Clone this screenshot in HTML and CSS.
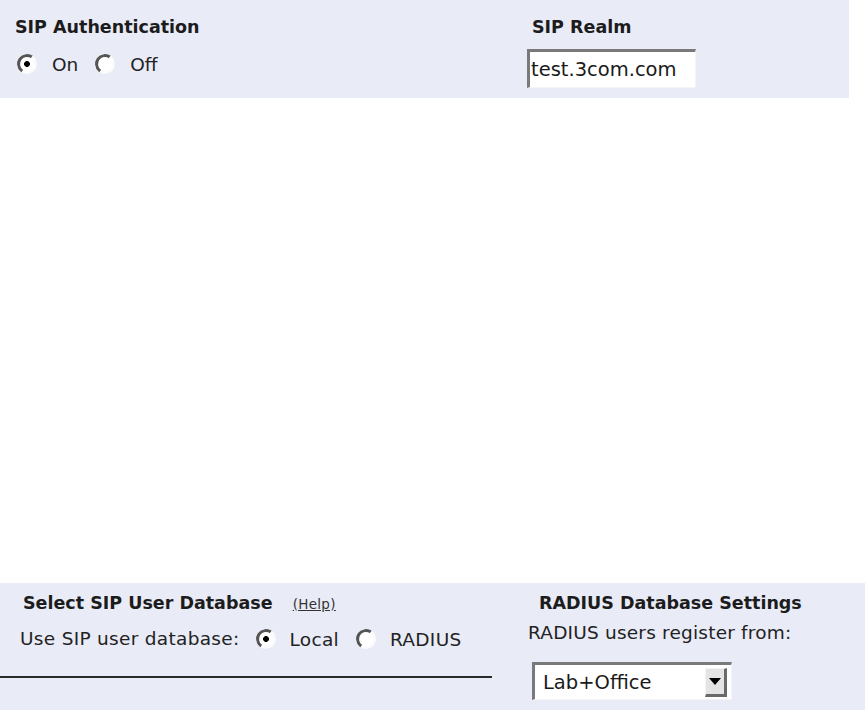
FILE: index.html
```html
<!DOCTYPE html>
<html lang="en">
<head>
    <meta charset="UTF-8">
    <title>SIP Authentication</title>
    <link rel="stylesheet" href="styles.css">
</head>
<body>
<div class="panel panel-top">
    <div class="col col-auth">
        <div class="heading">SIP Authentication</div>
        <div class="radio-row">
            <label class="radio"><input type="radio" name="auth" checked><span>On</span></label>
            <label class="radio"><input type="radio" name="auth"><span>Off</span></label>
        </div>
    </div>
    <div class="col col-realm">
        <div class="heading">SIP Realm</div>
        <input type="text" class="text-field" value="test.3com.com">
    </div>
</div>

<div class="panel panel-bottom">
    <div class="col col-db">
        <div class="heading heading-db">Select SIP User Database <a href="#" class="help">(Help)</a></div>
        <div class="radio-row db-row">
            <span class="row-label">Use SIP user database:</span>
            <label class="radio"><input type="radio" name="db" checked><span>Local</span></label>
            <label class="radio"><input type="radio" name="db"><span>RADIUS</span></label>
        </div>
        <div class="rule"></div>
    </div>
    <div class="col col-radius">
        <div class="heading heading-radius">RADIUS Database Settings</div>
        <div class="row-label">RADIUS users register from:</div>
        <div class="select-box">
            <span class="select-value">Lab+Office</span>
            <span class="select-arrow"></span>
        </div>
    </div>
</div>
</body>
</html>
```

FILE: styles.css
```css
body {
    margin: 0;
    background-color: #fff;
    font-family: "DejaVu Sans", sans-serif;
    color: #222;
}

.panel {
    background-color: #e9ebf7;
    display: flex;
}

.panel-top {
    width: 849px;
    height: 98px;
    box-sizing: border-box;
    padding-top: 15px;
}

.panel-bottom {
    margin-top: 485px;
    height: 127px;
    box-sizing: border-box;
    padding-top: 8px;
}

.heading {
    font-weight: bold;
    font-size: 17.5px;
    line-height: 24px;
    color: #1c1c1c;
    white-space: nowrap;
}

/* top panel */
.col-auth {
    width: 527px;
    padding-left: 15px;
    box-sizing: border-box;
}

.col-auth .radio-row {
    margin-top: 13px;
    margin-left: 2px;
}

.col-realm .heading {
    margin-left: 5px;
}

.text-field {
    display: block;
    margin-top: 10px;
    width: 169px;
    height: 39px;
    box-sizing: border-box;
    padding: 0 0 0 1px;
    border-style: solid;
    border-width: 3px 1px 1px 3px;
    border-color: #7a7a7a #f4f4f4 #f4f4f4 #7a7a7a;
    background: #fff;
    font-family: "DejaVu Sans", sans-serif;
    font-size: 19.5px;
    color: #1a1a1a;
    outline: none;
}

/* radio buttons */
.radio-row {
    display: flex;
    align-items: center;
    height: 24px;
    font-size: 18.5px;
}

.radio {
    display: flex;
    align-items: center;
    margin-right: 17px;
}

.radio input {
    appearance: none;
    -webkit-appearance: none;
    margin: 0 15px 0 0;
    width: 20px;
    height: 20px;
    border-radius: 50%;
    border: 3px solid;
    border-color: #555 #fbfbfb #fbfbfb #555;
    background-color: #fff;
    box-sizing: border-box;
    transform: rotate(-10deg);
}

.radio input:checked {
    background: radial-gradient(circle, #000 0, #000 2.6px, #fff 3.2px);
}

/* bottom panel */
.col-db {
    width: 528px;
}

.heading-db {
    padding-left: 23px;
}

.help {
    margin-left: 14px;
    font-weight: normal;
    font-size: 13.5px;
    letter-spacing: 0.3px;
    color: #333;
    text-decoration: underline;
}

.db-row {
    margin-top: 11px;
    padding-left: 20px;
    letter-spacing: 0.3px;
}

.db-row .row-label {
    margin-right: 16px;
}

.db-row .radio input {
    margin-right: 14px;
}

.rule {
    margin-top: 25px;
    width: 492px;
    border-top: 2px solid #2a2a2a;
}

.col-radius .heading-radius {
    margin-left: 11px;
}

.row-label {
    font-size: 18.5px;
    line-height: 24px;
    white-space: nowrap;
}

.col-radius .row-label {
    margin-top: 6px;
    letter-spacing: 0.2px;
}

.select-box {
    display: flex;
    align-items: center;
    margin: 17px 0 0 4px;
    width: 200px;
    height: 38px;
    box-sizing: border-box;
    border-style: solid;
    border-width: 3px 1px 1px 3px;
    border-color: #7a7a7a #f4f4f4 #f4f4f4 #7a7a7a;
    background: #fff;
    padding: 0 4px 0 8px;
}

.select-value {
    flex: 1;
    font-size: 19.5px;
    color: #1a1a1a;
}

.select-arrow {
    width: 22px;
    height: 29px;
    box-sizing: border-box;
    background-color: #e4e4e4;
    border-style: solid;
    border-width: 1px 3px 3px 1px;
    border-color: #f4f4f4 #6a6a6a #6a6a6a #f4f4f4;
    display: flex;
    align-items: center;
    justify-content: center;
}

.select-arrow::after {
    content: "";
    border-left: 6px solid transparent;
    border-right: 6px solid transparent;
    border-top: 7px solid #000;
}
```
